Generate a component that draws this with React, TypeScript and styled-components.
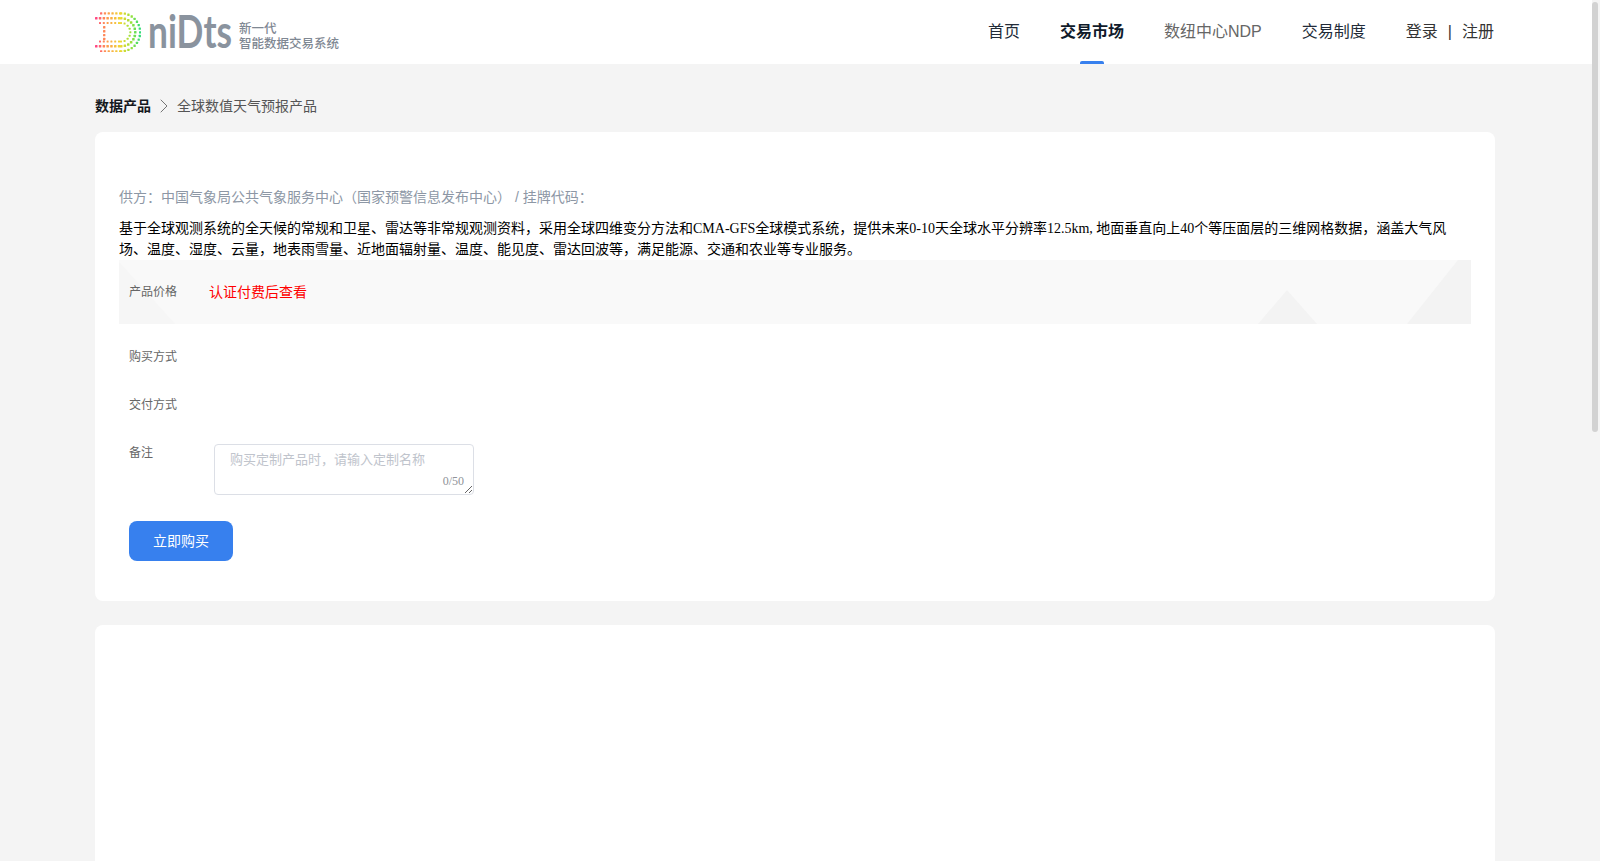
import React from 'react';
import styled, { createGlobalStyle } from 'styled-components';
import { ChevronRight } from 'lucide-react';

const GlobalStyle = createGlobalStyle`
  html, body {
    margin: 0;
    padding: 0;
    height: 100%;
    overflow: hidden;
    background: #f4f4f4;
  }
  #root {
    height: 100%;
  }
  * {
    box-sizing: border-box;
  }
`;

const SANS = `"Liberation Sans", "Noto Sans CJK SC", sans-serif`;
const SERIF = `"Liberation Serif", "Noto Sans CJK SC", serif`;

const Shell = styled.div`
  height: 861px;
  display: flex;
  background: #f4f4f4;
  overflow: hidden;
`;

const Page = styled.div`
  flex: 1;
  min-width: 0;
  height: 100%;
  overflow: hidden;
`;

const ScrollRail = styled.div`
  width: 8px;
  padding: 2px 2px 0 0;
  flex-shrink: 0;
`;

const ScrollThumb = styled.div`
  height: 430px;
  background: #d2d2d2;
  border-radius: 3px;
`;

const Header = styled.header`
  height: 64px;
  background: #fff;
  padding: 0 98px 0 95px;
  display: flex;
  align-items: center;
  justify-content: space-between;
`;

const LogoLink = styled.a`
  display: flex;
  align-items: center;
  gap: 5px;
  height: 64px;
`;

const LogoWords = styled.div`
  display: flex;
  flex-direction: column;
  padding-top: 9px;
  color: #7f8893;
  font-family: ${SANS};
  font-weight: 500;
`;

const LogoLine = styled.span`
  display: block;
  height: 15px;
  font-size: 12.5px;
  line-height: 15px;
  white-space: nowrap;
`;

const Nav = styled.nav`
  display: flex;
  align-items: center;
  gap: 40px;
  height: 64px;
`;

const NavItem = styled.a<{ $active?: boolean; $muted?: boolean }>`
  position: relative;
  height: 64px;
  line-height: 63px;
  font-family: ${SANS};
  font-size: 16px;
  font-weight: ${p => (p.$active ? 700 : 400)};
  color: ${p => (p.$active ? '#0f1a2a' : p.$muted ? '#666' : '#222b38')};
  white-space: nowrap;

  ${p =>
    p.$active &&
    `
    &::after {
      content: '';
      position: absolute;
      left: 20px;
      bottom: 0;
      width: 24px;
      height: 3px;
      border-radius: 2px 2px 0 0;
      background: #3780ee;
    }
  `}
`;

const AuthLinks = styled.div`
  display: flex;
  align-items: center;
  gap: 10px;
  height: 64px;
  font-family: ${SANS};
  font-size: 16px;
  color: #333;
  line-height: 62px;
  white-space: nowrap;
`;

const Main = styled.main`
  padding: 0 97px 0 95px;
`;

const Breadcrumb = styled.div`
  height: 68px;
  padding-top: 32px;
  display: flex;
  align-items: flex-start;
  font-family: ${SANS};
  font-size: 14px;
  line-height: 20px;
`;

const CrumbRoot = styled.span`
  font-weight: 700;
  color: #15181d;
`;

const CrumbSep = styled.span`
  width: 26px;
  height: 20px;
  display: flex;
  align-items: center;
  justify-content: center;
  color: #666;
`;

const CrumbCurrent = styled.span`
  color: #555;
`;

const Card = styled.section`
  background: #fff;
  border-radius: 8px;
  padding: 54px 24px 40px;
  margin-bottom: 24px;
`;

const EmptyCard = styled.section`
  background: #fff;
  border-radius: 8px;
  height: 400px;
`;

const Supplier = styled.div`
  font-family: ${SANS};
  font-size: 14px;
  line-height: 22px;
  color: #8d97a5;
`;

const Description = styled.p`
  margin: 10px 0 0;
  font-family: ${SERIF};
  font-size: 14px;
  line-height: 21px;
  color: #000;
`;

const PriceStrip = styled.div`
  position: relative;
  height: 64px;
  display: flex;
  align-items: center;
  padding: 0 0 3px 10px;
  background: #f9f9f9;
  overflow: hidden;
`;

const StripArt = styled.svg`
  position: absolute;
  left: 0;
  top: 0;
  width: 100%;
  height: 100%;
`;

const Label = styled.span`
  position: relative;
  width: 80px;
  flex-shrink: 0;
  font-family: ${SANS};
  font-size: 12px;
  color: #666;
`;

const PriceValue = styled.span`
  position: relative;
  font-family: ${SANS};
  font-size: 14px;
  color: #f00;
`;

const Row = styled.div`
  height: 48px;
  padding: 0 0 2px 10px;
  display: flex;
  align-items: center;
`;

const Rows = styled.div`
  padding-top: 8px;
`;

const NoteRow = styled.div`
  margin-top: 16px;
  padding-left: 10px;
  display: flex;
  align-items: flex-start;
`;

const NoteLabel = styled(Label)`
  width: 85px;
  line-height: 18px;
`;

const NoteBox = styled.div`
  position: relative;
  width: 260px;
  height: 51px;
`;

const NoteInput = styled.textarea`
  display: block;
  width: 260px;
  height: 51px;
  padding: 5px 15px;
  border: 1px solid #dcdfe6;
  border-radius: 4px;
  outline: none;
  resize: vertical;
  background: #fff;
  font-family: ${SANS};
  font-size: 13px;
  line-height: 20px;
  color: #606266;

  &::placeholder {
    color: #c0c4cc;
  }
`;

const Counter = styled.span`
  position: absolute;
  right: 10px;
  bottom: 6px;
  font-family: ${SERIF};
  font-size: 12px;
  line-height: 15px;
  color: #909399;
`;

const BuyButton = styled.button`
  display: block;
  width: 104px;
  height: 40px;
  margin: 26px 0 0 10px;
  padding: 0 0 3px;
  border: none;
  border-radius: 8px;
  background: #3780ee;
  color: #fff;
  font-family: ${SANS};
  font-size: 14px;
  cursor: pointer;
`;

// left to right colour of the D mark
const dotColor = (x: number) => {
  const stops = [
    [0, [255, 70, 130]],
    [0.22, [255, 150, 80]],
    [0.55, [240, 215, 50]],
    [0.8, [150, 225, 60]],
    [1, [50, 220, 120]],
  ] as [number, number[]][];
  const t = Math.min(1, Math.max(0, x / 44));
  for (let i = 1; i < stops.length; i++) {
    if (t <= stops[i][0]) {
      const k = (t - stops[i - 1][0]) / (stops[i][0] - stops[i - 1][0]);
      const c = stops[i - 1][1].map((v, j) => Math.round(v + (stops[i][1][j] - v) * k));
      return `rgb(${c.join(',')})`;
    }
  }
  return 'rgb(50,220,120)';
};

const buildDots = () => {
  const dots: { x: number; y: number; w: number }[] = [];
  const ring = (left: number, top: number, bottom: number, straightTo: number, w: number) => {
    const step = 3.8;
    const cy = (top + bottom) / 2;
    const r = (bottom - top) / 2;
    for (let x = left; x < straightTo; x += step) {
      dots.push({ x, y: top, w });
      dots.push({ x, y: bottom, w });
    }
    const n = Math.round((Math.PI * r) / step);
    for (let i = 0; i <= n; i++) {
      const a = -Math.PI / 2 + (Math.PI * i) / n;
      dots.push({ x: straightTo + r * Math.cos(a), y: cy + r * Math.sin(a), w });
    }
  };
  ring(5, 0.7, 38.7, 25, 2.3);
  ring(0, 5.7, 33.7, 25, 2.5);
  ring(4, 10.3, 29, 25, 2);
  for (let y = 14.7; y <= 26.5; y += 3.9) {
    dots.push({ x: 8, y, w: 2.4 });
  }
  return dots;
};

const LogoMark = () => (
  <svg width="46" height="40" viewBox="0 0 46 40" aria-hidden="true">
    {buildDots().map((d, i) => (
      <rect key={i} x={d.x} y={d.y - d.w / 2 + 0.6} width={d.w} height={d.w} rx="0.5" fill={dotColor(d.x)} />
    ))}
  </svg>
);

const LogoName = () => (
  <svg width="88" height="64" viewBox="0 0 88 64">
    <text
      x="2"
      y="48"
      textLength="84"
      lengthAdjust="spacingAndGlyphs"
      fontFamily="Lato, 'Open Sans', sans-serif"
      fontSize="46"
      fontWeight="700"
      fill="#8a939e"
    >
      niDts
    </text>
  </svg>
);

export default function App() {
  return (
    <>
      <GlobalStyle />
      <Shell>
        <Page>
          <Header>
            <LogoLink>
              <LogoMark />
              <LogoName />
              <LogoWords>
                <LogoLine>新一代</LogoLine>
                <LogoLine>智能数据交易系统</LogoLine>
              </LogoWords>
            </LogoLink>
            <Nav>
              <NavItem>首页</NavItem>
              <NavItem $active>交易市场</NavItem>
              <NavItem $muted>数纽中心NDP</NavItem>
              <NavItem>交易制度</NavItem>
              <AuthLinks>
                <span>登录</span>
                <span>|</span>
                <span>注册</span>
              </AuthLinks>
            </Nav>
          </Header>
          <Main>
            <Breadcrumb>
              <CrumbRoot>数据产品</CrumbRoot>
              <CrumbSep>
                <ChevronRight size={24} strokeWidth={0.9} />
              </CrumbSep>
              <CrumbCurrent>全球数值天气预报产品</CrumbCurrent>
            </Breadcrumb>
            <Card>
              <Supplier>供方：中国气象局公共气象服务中心（国家预警信息发布中心） / 挂牌代码：</Supplier>
              <Description>
                基于全球观测系统的全天候的常规和卫星、雷达等非常规观测资料，采用全球四维变分方法和CMA-GFS全球模式系统，提供未来0-10天全球水平分辨率12.5km,
                地面垂直向上40个等压面层的三维网格数据，涵盖大气风场、温度、湿度、云量，地表雨雪量、近地面辐射量、温度、能见度、雷达回波等，满足能源、交通和农业等专业服务。
              </Description>
              <PriceStrip>
                <StripArt viewBox="0 0 1352 64" preserveAspectRatio="none" aria-hidden="true">
                  <polygon points="0,2 0,64 56,64" fill="#f6f6f6" />
                  <polygon points="1139,64 1168,30 1198,64" fill="#f3f3f3" />
                  <polygon points="1288,64 1339,0 1352,0 1352,64" fill="#f3f3f3" />
                </StripArt>
                <Label>产品价格</Label>
                <PriceValue>认证付费后查看</PriceValue>
              </PriceStrip>
              <Rows>
                <Row>
                  <Label>购买方式</Label>
                </Row>
                <Row>
                  <Label>交付方式</Label>
                </Row>
              </Rows>
              <NoteRow>
                <NoteLabel>备注</NoteLabel>
                <NoteBox>
                  <NoteInput placeholder="购买定制产品时，请输入定制名称" />
                  <Counter>0/50</Counter>
                </NoteBox>
              </NoteRow>
              <BuyButton>立即购买</BuyButton>
            </Card>
            <EmptyCard />
          </Main>
        </Page>
        <ScrollRail>
          <ScrollThumb />
        </ScrollRail>
      </Shell>
    </>
  );
}
